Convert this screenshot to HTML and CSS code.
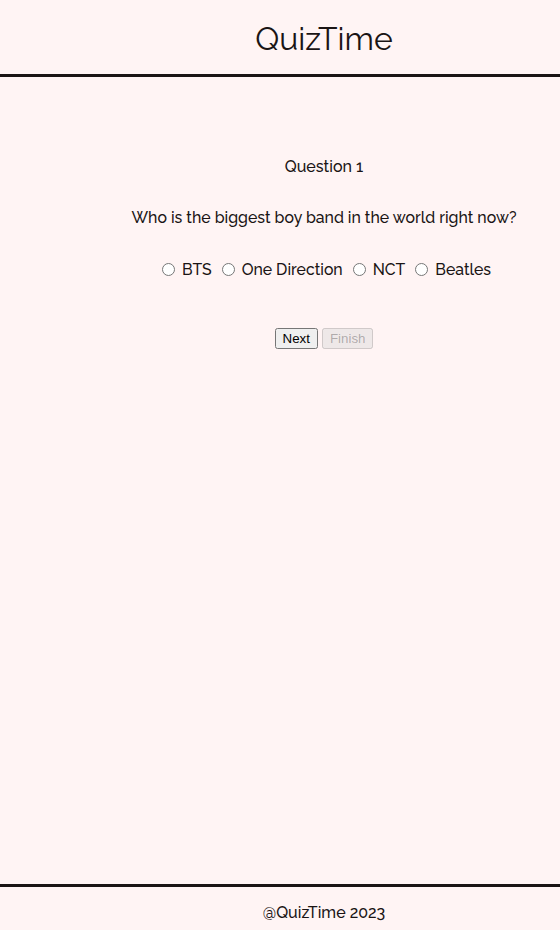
FILE: index.html
```html
<!DOCTYPE html>
<html>
<head>
<meta charset="utf-8">
<title>QuizTime</title>
<link rel="stylesheet" href="styles.css">
</head>
<body>
<header class="top">
  <h1 class="brand">QuizTime</h1>
</header>
<main class="quiz">
  <h2 class="q-num">Question 1</h2>
  <p class="q-text">Who is the biggest boy band in the world right now?</p>
  <div class="options">
    <label class="opt"><input type="radio" name="a">BTS</label>
    <label class="opt"><input type="radio" name="a">One Direction</label>
    <label class="opt"><input type="radio" name="a">NCT</label>
    <label class="opt"><input type="radio" name="a">Beatles</label>
  </div>
  <div class="actions">
    <button class="btn">Next</button>
    <button class="btn" disabled>Finish</button>
  </div>
</main>
<footer class="bottom">
  <p class="copy">@QuizTime 2023</p>
</footer>
</body>
</html>
```

FILE: styles.css
```css
html, body {
  margin: 0;
  padding: 0;
  background: #fff4f4;
  color: #1a1414;
  font-family: "Raleway", "Lato", "Open Sans", sans-serif;
}
body {
  min-height: 930px;
  display: flex;
  flex-direction: column;
}
.top {
  border-bottom: 3px solid #1a1414;
  display: flex;
  align-items: center;
  justify-content: center;
  padding-left: 88px;
  box-sizing: border-box;
  height: 77px;
  padding-top: 3px;
}
.brand {
  margin: 0;
  font-weight: 400;
  font-size: 32px;
}
.quiz {
  flex: 1;
  display: flex;
  flex-direction: column;
  align-items: center;
  padding-left: 88px;
  padding-top: 80px;
}
.q-num {
  margin: 0;
  font-size: 16px;
  font-weight: 500;
}
.q-text {
  margin: 32px 0 0;
  font-size: 15.85px;
  font-weight: 500;
}
.options {
  margin-top: 33px;
  display: flex;
  align-items: center;
  font-size: 15.8px;
  font-weight: 500;
}
.opt {
  display: flex;
  align-items: center;
  margin-right: 5px;
}
.opt:last-child {
  margin-right: 0;
}
.opt input {
  margin: 0 7px 0 5px;
}
.actions {
  margin-top: 49px;
  display: flex;
  gap: 4px;
}
.bottom {
  height: 46px;
  box-sizing: border-box;
  border-top: 3px solid #1a1414;
  display: flex;
  align-items: center;
  justify-content: center;
  padding-left: 88px;
  padding-top: 8px;
}
.copy {
  margin: 0;
  font-size: 16px;
  font-weight: 500;
}
```
